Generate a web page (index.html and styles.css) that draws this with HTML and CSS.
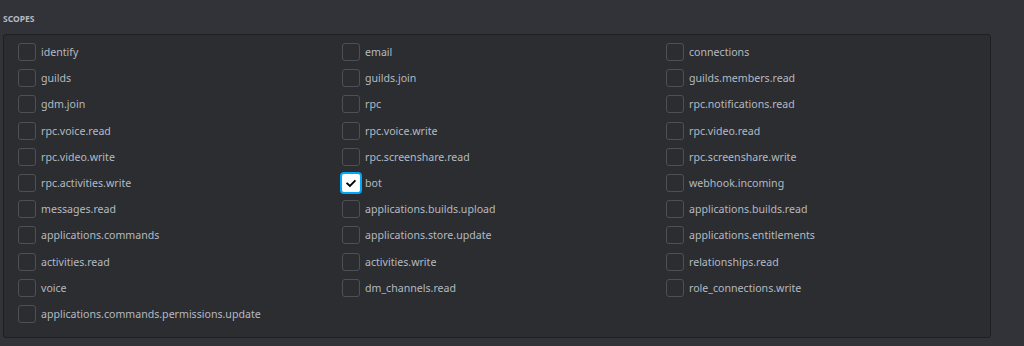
FILE: index.html
```html
<!DOCTYPE html>
<html lang="en">
<head>
<meta charset="utf-8">
<title>Scopes</title>
<link rel="stylesheet" href="styles.css">
</head>
<body>
<section class="scopes">
  <h2 class="scopes-title">Scopes</h2>
  <div class="scopes-box">
    <ul class="scope-grid">
      <li class="scope"><span class="cb"></span><span class="label">identify</span></li>
      <li class="scope"><span class="cb"></span><span class="label">email</span></li>
      <li class="scope"><span class="cb"></span><span class="label">connections</span></li>
      <li class="scope"><span class="cb"></span><span class="label">guilds</span></li>
      <li class="scope"><span class="cb"></span><span class="label">guilds.join</span></li>
      <li class="scope"><span class="cb"></span><span class="label">guilds.members.read</span></li>
      <li class="scope"><span class="cb"></span><span class="label">gdm.join</span></li>
      <li class="scope"><span class="cb"></span><span class="label">rpc</span></li>
      <li class="scope"><span class="cb"></span><span class="label">rpc.notifications.read</span></li>
      <li class="scope"><span class="cb"></span><span class="label">rpc.voice.read</span></li>
      <li class="scope"><span class="cb"></span><span class="label">rpc.voice.write</span></li>
      <li class="scope"><span class="cb"></span><span class="label">rpc.video.read</span></li>
      <li class="scope"><span class="cb"></span><span class="label">rpc.video.write</span></li>
      <li class="scope"><span class="cb"></span><span class="label">rpc.screenshare.read</span></li>
      <li class="scope"><span class="cb"></span><span class="label">rpc.screenshare.write</span></li>
      <li class="scope"><span class="cb"></span><span class="label">rpc.activities.write</span></li>
      <li class="scope"><span class="cb checked"><svg viewBox="0 0 18 18" width="18" height="18"><path d="M5.2 9.4 L7.9 12 L12.8 7" fill="none" stroke="#000" stroke-width="1.8" stroke-linecap="square"/></svg></span><span class="label">bot</span></li>
      <li class="scope"><span class="cb"></span><span class="label">webhook.incoming</span></li>
      <li class="scope"><span class="cb"></span><span class="label">messages.read</span></li>
      <li class="scope"><span class="cb"></span><span class="label">applications.builds.upload</span></li>
      <li class="scope"><span class="cb"></span><span class="label">applications.builds.read</span></li>
      <li class="scope"><span class="cb"></span><span class="label">applications.commands</span></li>
      <li class="scope"><span class="cb"></span><span class="label">applications.store.update</span></li>
      <li class="scope"><span class="cb"></span><span class="label">applications.entitlements</span></li>
      <li class="scope"><span class="cb"></span><span class="label">activities.read</span></li>
      <li class="scope"><span class="cb"></span><span class="label">activities.write</span></li>
      <li class="scope"><span class="cb"></span><span class="label">relationships.read</span></li>
      <li class="scope"><span class="cb"></span><span class="label">voice</span></li>
      <li class="scope"><span class="cb"></span><span class="label">dm_channels.read</span></li>
      <li class="scope"><span class="cb"></span><span class="label">role_connections.write</span></li>
      <li class="scope"><span class="cb"></span><span class="label">applications.commands.permissions.update</span></li>
    </ul>
  </div>
</section>
</body>
</html>
```

FILE: styles.css
```css
html, body {
  margin: 0;
  padding: 0;
  background: #313338;
  height: 100%;
}

body {
  font-family: "Noto Sans", "Open Sans", sans-serif;
  color: #b5bac1;
}

.scopes {
  padding: 14px 0 0 3px;
}

.scopes-title {
  margin: 0 0 10px 0;
  font-size: 8.5px;
  line-height: 10px;
  font-weight: 700;
  text-transform: uppercase;
  color: #b5bac1;
  letter-spacing: 0;
}

.scopes-box {
  width: 986px;
  box-sizing: content-box;
  background: #2b2d31;
  border: 1px solid #1e1f22;
  border-radius: 3px;
  padding: 4px 0 10px 0;
}

.scope-grid {
  list-style: none;
  margin: 0;
  padding: 0 0 0 14px;
  display: grid;
  grid-template-columns: repeat(3, 324px);
  grid-auto-rows: 26.2px;
}

.scope {
  display: flex;
  align-items: center;
  gap: 5px;
  font-size: 10.6px;
  line-height: 16px;
}

.cb {
  box-sizing: border-box;
  width: 18px;
  height: 18px;
  border: 1px solid #4e5058;
  border-radius: 3px;
  flex: none;
  display: flex;
  align-items: center;
  justify-content: center;
}

.cb.checked {
  background: #ffffff;
  border: none;
  border-radius: 2px;
  box-shadow: 0 0 0 2px #00a8fc;
}

.cb svg {
  display: block;
}

.label {
  white-space: nowrap;
}
```
